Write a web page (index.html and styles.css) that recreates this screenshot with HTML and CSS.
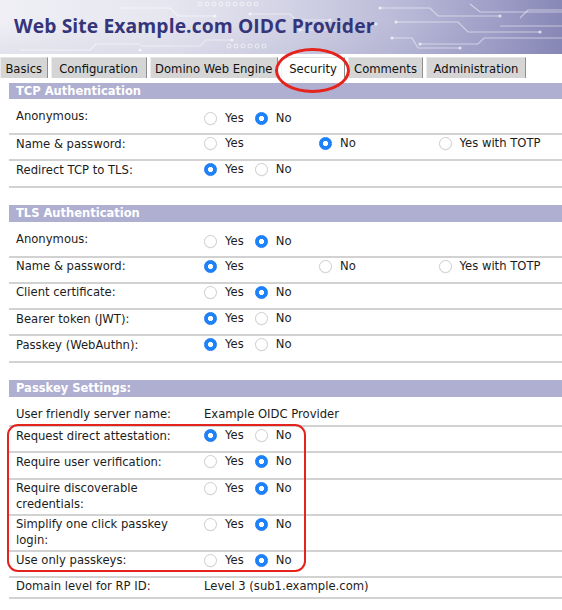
FILE: index.html
```html
<!DOCTYPE html>
<html lang="en">
<head>
<meta charset="utf-8">
<title>Web Site Example.com OIDC Provider</title>
<link rel="stylesheet" href="styles.css">
</head>
<body>
<header class="banner">
  <svg class="circuit" viewBox="0 0 562 54" preserveAspectRatio="none" aria-hidden="true">
    <g fill="none" stroke="#ffffff" stroke-opacity="0.5" stroke-width="1.1">
      <path d="M20 50 H90 L96 44 H140"/>
      <path d="M120 8 H170 L178 16 H215"/>
      <path d="M140 46 H200 L206 40 H232"/>
      <path d="M250 14 H290 L296 20 H330"/>
      <path d="M300 30 H350 L356 24 H376"/>
      <path d="M380 8 H430 L438 16 H500"/>
      <path d="M396 22 H458 L468 32 H540"/>
      <path d="M420 44 H478 L484 38 H562"/>
      <path d="M470 4 L480 12 H562"/>
      <path d="M500 26 H562"/>
      <path d="M392 38 H412 L418 48 H460"/>
      <path d="M520 18 L528 10 H562"/>
    </g>
    <g fill="#ffffff" fill-opacity="0.65">
      <circle cx="140" cy="50" r="1.6"/><circle cx="215" cy="16" r="1.6"/>
      <circle cx="232" cy="40" r="1.6"/><circle cx="330" cy="20" r="1.6"/>
      <circle cx="376" cy="24" r="1.6"/><circle cx="500" cy="16" r="1.6"/>
      <circle cx="380" cy="8" r="1.6"/><circle cx="396" cy="22" r="1.6"/>
      <circle cx="540" cy="32" r="1.6"/><circle cx="420" cy="44" r="1.6"/>
      <circle cx="460" cy="48" r="1.6"/><circle cx="392" cy="38" r="1.6"/>
      <circle cx="300" cy="30" r="1.6"/><circle cx="250" cy="14" r="1.6"/>
    </g>
    <g fill="none" stroke="#ffffff" stroke-opacity="0.6" stroke-width="1">
      <circle cx="200" cy="4" r="2"/><circle cx="207" cy="4" r="2"/><circle cx="214" cy="4" r="2"/>
      <circle cx="221" cy="4" r="2"/><circle cx="228" cy="4" r="2"/><circle cx="235" cy="4" r="2"/>
      <circle cx="242" cy="4" r="2"/><circle cx="249" cy="4" r="2"/><circle cx="256" cy="4" r="2"/>
      <circle cx="229" cy="46" r="2"/><circle cx="236" cy="46" r="2"/><circle cx="243" cy="46" r="2"/>
      <circle cx="250" cy="46" r="2"/><circle cx="257" cy="46" r="2"/><circle cx="264" cy="46" r="2"/>
    </g>
  </svg>
  <h1 class="title">Web Site Example.com OIDC Provider</h1>
</header>

<nav class="tabs">
  <span class="tab tab-basics">Basics</span>
  <span class="tab tab-config">Configuration</span>
  <span class="tab tab-domino">Domino Web Engine</span>
  <span class="tab tab-security active">Security</span>
  <span class="tab tab-comments">Comments</span>
  <span class="tab tab-admin">Administration</span>
</nav>

<main class="content">
  <section class="section">
    <h2 class="sec-head">TCP Authentication</h2>
    <div class="row first">
      <div class="lbl">Anonymous:</div>
      <div class="val"><div class="opts">
        <label class="opt"><input class="radio" type="radio" name="tcp-anon">Yes</label>
        <label class="opt"><input class="radio" type="radio" name="tcp-anon" checked>No</label>
      </div></div>
    </div>
    <div class="row">
      <div class="lbl">Name &amp; password:</div>
      <div class="val"><div class="opts three">
        <label class="opt"><input class="radio" type="radio" name="tcp-pw">Yes</label>
        <label class="opt"><input class="radio" type="radio" name="tcp-pw" checked>No</label>
        <label class="opt"><input class="radio" type="radio" name="tcp-pw">Yes with TOTP</label>
      </div></div>
    </div>
    <div class="row">
      <div class="lbl">Redirect TCP to TLS:</div>
      <div class="val"><div class="opts">
        <label class="opt"><input class="radio" type="radio" name="tcp-redir" checked>Yes</label>
        <label class="opt"><input class="radio" type="radio" name="tcp-redir">No</label>
      </div></div>
    </div>
  </section>

  <section class="section">
    <h2 class="sec-head">TLS Authentication</h2>
    <div class="row first">
      <div class="lbl">Anonymous:</div>
      <div class="val"><div class="opts">
        <label class="opt"><input class="radio" type="radio" name="tls-anon">Yes</label>
        <label class="opt"><input class="radio" type="radio" name="tls-anon" checked>No</label>
      </div></div>
    </div>
    <div class="row">
      <div class="lbl">Name &amp; password:</div>
      <div class="val"><div class="opts three">
        <label class="opt"><input class="radio" type="radio" name="tls-pw" checked>Yes</label>
        <label class="opt"><input class="radio" type="radio" name="tls-pw">No</label>
        <label class="opt"><input class="radio" type="radio" name="tls-pw">Yes with TOTP</label>
      </div></div>
    </div>
    <div class="row">
      <div class="lbl">Client certificate:</div>
      <div class="val"><div class="opts">
        <label class="opt"><input class="radio" type="radio" name="tls-cert">Yes</label>
        <label class="opt"><input class="radio" type="radio" name="tls-cert" checked>No</label>
      </div></div>
    </div>
    <div class="row">
      <div class="lbl">Bearer token (JWT):</div>
      <div class="val"><div class="opts">
        <label class="opt"><input class="radio" type="radio" name="tls-jwt" checked>Yes</label>
        <label class="opt"><input class="radio" type="radio" name="tls-jwt">No</label>
      </div></div>
    </div>
    <div class="row">
      <div class="lbl">Passkey (WebAuthn):</div>
      <div class="val"><div class="opts">
        <label class="opt"><input class="radio" type="radio" name="tls-pk" checked>Yes</label>
        <label class="opt"><input class="radio" type="radio" name="tls-pk">No</label>
      </div></div>
    </div>
  </section>

  <section class="section">
    <h2 class="sec-head">Passkey Settings:</h2>
    <div class="row text first">
      <div class="lbl">User friendly server name:</div>
      <div class="val">Example OIDC Provider</div>
    </div>
    <div class="row">
      <div class="lbl">Request direct attestation:</div>
      <div class="val"><div class="opts">
        <label class="opt"><input class="radio" type="radio" name="pk-att" checked>Yes</label>
        <label class="opt"><input class="radio" type="radio" name="pk-att">No</label>
      </div></div>
    </div>
    <div class="row">
      <div class="lbl">Require user verification:</div>
      <div class="val"><div class="opts">
        <label class="opt"><input class="radio" type="radio" name="pk-uv">Yes</label>
        <label class="opt"><input class="radio" type="radio" name="pk-uv" checked>No</label>
      </div></div>
    </div>
    <div class="row">
      <div class="lbl">Require discoverable credentials:</div>
      <div class="val"><div class="opts">
        <label class="opt"><input class="radio" type="radio" name="pk-disc">Yes</label>
        <label class="opt"><input class="radio" type="radio" name="pk-disc" checked>No</label>
      </div></div>
    </div>
    <div class="row">
      <div class="lbl">Simplify one click passkey login:</div>
      <div class="val"><div class="opts">
        <label class="opt"><input class="radio" type="radio" name="pk-one">Yes</label>
        <label class="opt"><input class="radio" type="radio" name="pk-one" checked>No</label>
      </div></div>
    </div>
    <div class="row">
      <div class="lbl">Use only passkeys:</div>
      <div class="val"><div class="opts">
        <label class="opt"><input class="radio" type="radio" name="pk-only">Yes</label>
        <label class="opt"><input class="radio" type="radio" name="pk-only" checked>No</label>
      </div></div>
    </div>
    <div class="row text">
      <div class="lbl">Domain level for RP ID:</div>
      <div class="val">Level 3 (sub1.example.com)</div>
    </div>
  </section>
</main>

<div class="mark-tab" aria-hidden="true"></div>
<div class="mark-box" aria-hidden="true"></div>
</body>
</html>
```

FILE: styles.css
```css
html, body {
  margin: 0;
  padding: 0;
}

body {
  position: relative;
  width: 562px;
  min-height: 610px;
  overflow: hidden;
  background: #ffffff;
  color: #1c1c1c;
  font-family: "DejaVu Sans", "Liberation Sans", sans-serif;
  font-size: 11.6px;
}

/* ---------- banner ---------- */
.banner {
  position: relative;
  height: 54px;
  overflow: hidden;
  background:
    linear-gradient(180deg, rgba(255,255,255,0) 40%, rgba(120,120,170,0.10) 100%),
    linear-gradient(90deg, #efeff5 0%, #e6e6f0 30%, #d4d4e6 50%, #bcbcd9 70%, #9e9ec7 88%, #8888b7 100%);
}

.circuit {
  position: absolute;
  inset: 0;
  width: 100%;
  height: 100%;
}

.title {
  position: relative;
  margin: 0;
  padding: 13.5px 0 0 14px;
  font-family: "Open Sans", "DejaVu Sans", sans-serif;
  font-weight: 700;
  font-size: 19.3px;
  line-height: 24px;
  letter-spacing: 0.1px;
  color: #35357a;
}

/* ---------- tabs ---------- */
.tabs {
  display: flex;
  gap: 3px;
  height: 21px;
  margin-top: 2.5px;
}

.tab {
  box-sizing: border-box;
  height: 21px;
  padding-top: 3px;
  line-height: 17px;
  text-align: center;
  white-space: nowrap;
  font-size: 11.6px;
  color: #111111;
  background: #d5d5d5;
  border-top: 1px solid #e4e4e4;
  border-left: 1px solid #ececec;
  border-right: 1px solid #8e8e8e;
}

.tab.active {
  background: #ffffff;
  border-left-color: #f4f4f4;
}

.tab-basics   { width: 47.5px; }
.tab-config   { width: 96px; }
.tab-domino   { width: 128.5px; }
.tab-security { width: 64px; }
.tab-comments { width: 75px; }
.tab-admin    { width: 100px; }

/* ---------- form content ---------- */
.content {
  margin-top: 5px;
  padding-left: 9px;
}

.section + .section {
  margin-top: 17.5px;
}

.sec-head {
  margin: 0;
  height: 16.5px;
  padding-left: 7px;
  line-height: 16.5px;
  font-size: 11.5px;
  font-weight: 700;
  color: #ffffff;
  background: #afafd1;
}

.row {
  display: grid;
  grid-template-columns: 195px 1fr;
  align-items: start;
  min-height: 24.25px;
  border-bottom: 2px solid #d2d2d2;
}

.lbl {
  padding: 0.5px 12px 1.5px 7px;
  line-height: 16px;
}

.val {
  padding-top: 1px;
  line-height: 16px;
}

.row.first {
  min-height: 34px;
}

.row.first .lbl {
  padding-top: 9px;
}

.row.first .val {
  padding-top: 12px;
}

.row.text {
  min-height: 0;
  padding-bottom: 1px;
}

.row.text .val {
  padding-top: 0.5px;
}

.row.text.first {
  min-height: 27.5px;
}

.row.text.first .val {
  padding-top: 9px;
}

/* ---------- radio options ---------- */
.opts {
  display: flex;
  gap: 11px;
}

.opts.three .opt:nth-child(1) { width: 104px; }
.opts.three .opt:nth-child(2) { width: 108.5px; }

.opt {
  display: flex;
  align-items: center;
  gap: 8px;
  line-height: 15px;
  white-space: nowrap;
}

.radio {
  -webkit-appearance: none;
  appearance: none;
  flex: none;
  box-sizing: border-box;
  width: 13px;
  height: 13px;
  margin: 0;
  border-radius: 50%;
  border: 1px solid #d0d0d0;
  background: #ffffff;
  box-shadow: 0 0.5px 1px rgba(0, 0, 0, 0.08);
}

.radio:checked {
  border-color: #1878f2;
  background: radial-gradient(circle at center, #ffffff 0 2.3px, #1c83fb 2.9px);
}

/* ---------- red annotations (overlay) ---------- */
.mark-tab {
  position: absolute;
  left: 275px;
  top: 47.5px;
  width: 75px;
  height: 45px;
  box-sizing: border-box;
  border: 3px solid #e4231d;
  border-radius: 50%;
  pointer-events: none;
}

.mark-box {
  position: absolute;
  left: 6.5px;
  top: 423.5px;
  width: 299.5px;
  height: 148px;
  box-sizing: border-box;
  border: 2.5px solid #e4231d;
  border-radius: 11px;
  pointer-events: none;
}
```
